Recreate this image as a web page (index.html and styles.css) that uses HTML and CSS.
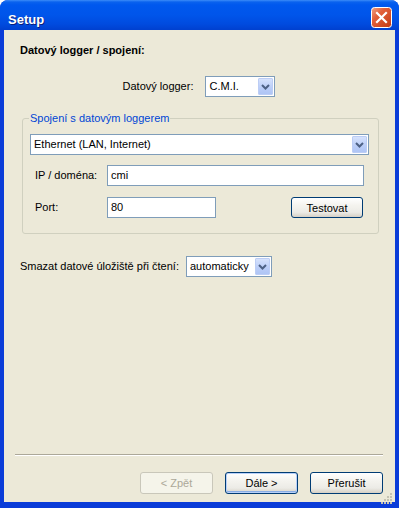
FILE: index.html
```html
<!doctype html>
<html lang="cs">
<head>
<meta charset="UTF-8">
<title>Setup</title>
<link rel="stylesheet" href="styles.css">
</head>
<body>
<div class="window">
    <div class="titlebar">
        <span class="title">Setup</span>
        <span class="close">
            <svg width="21" height="21" viewBox="0 0 21 21">
                <defs>
                    <linearGradient id="cg" x1="0" y1="0" x2="1" y2="1">
                        <stop offset="0" stop-color="#F0A487"/>
                        <stop offset="0.35" stop-color="#E2603A"/>
                        <stop offset="1" stop-color="#C23A12"/>
                    </linearGradient>
                </defs>
                <rect x="0.5" y="0.5" width="20" height="20" rx="3" fill="url(#cg)" stroke="#fff"/>
                <path d="M6 6 L15 15 M15 6 L6 15" stroke="#fff" stroke-width="2.2" stroke-linecap="square"/>
            </svg>
        </span>
    </div>
    <div class="client">
        <div class="content">
            <div class="heading">Datový logger / spojení:</div>
            <div class="logger-row">
                <span>Datový logger:</span>
                <div class="combo combo-logger">
                    <span class="combo-text">C.M.I.</span>
                    <span class="combo-btn"><svg width="9" height="6" viewBox="0 0 9 6"><path d="M1 1 L4.5 4.5 L8 1" fill="none" stroke="#4D6185" stroke-width="2"/></svg></span>
                </div>
            </div>
            <fieldset class="group">
                <legend>Spojení s datovým loggerem</legend>
                <div class="combo combo-conn">
                    <span class="combo-text">Ethernet (LAN, Internet)</span>
                    <span class="combo-btn"><svg width="9" height="6" viewBox="0 0 9 6"><path d="M1 1 L4.5 4.5 L8 1" fill="none" stroke="#4D6185" stroke-width="2"/></svg></span>
                </div>
                <div class="field-row">
                    <span class="field-label">IP / doména:</span>
                    <div class="textbox tb-ip">cmi</div>
                </div>
                <div class="field-row port-row">
                    <span class="field-label">Port:</span>
                    <div class="textbox tb-port">80</div>
                    <button class="btn btn-test">Testovat</button>
                </div>
            </fieldset>
            <div class="clear-row">
                <span class="clear-label">Smazat datové úložiště při čtení:</span>
                <div class="combo combo-clear">
                    <span class="combo-text">automaticky</span>
                    <span class="combo-btn"><svg width="9" height="6" viewBox="0 0 9 6"><path d="M1 1 L4.5 4.5 L8 1" fill="none" stroke="#4D6185" stroke-width="2"/></svg></span>
                </div>
            </div>
        </div>
        <div class="footer">
            <div class="separator"></div>
            <div class="buttons">
                <button class="btn" disabled>&lt; Zpět</button>
                <button class="btn btn-default">Dále &gt;</button>
                <button class="btn">Přerušit</button>
            </div>
        </div>
        <span class="grip">
            <svg width="12" height="12" viewBox="0 0 12 12" fill="#C5C2B2">
                <rect x="9" y="1" width="2" height="2"/>
                <rect x="6" y="4" width="2" height="2"/><rect x="9" y="4" width="2" height="2"/>
                <rect x="3" y="7" width="2" height="2"/><rect x="6" y="7" width="2" height="2"/><rect x="9" y="7" width="2" height="2"/>
                <rect x="0" y="10" width="2" height="2"/><rect x="3" y="10" width="2" height="2"/><rect x="6" y="10" width="2" height="2"/><rect x="9" y="10" width="2" height="2"/>
            </svg>
        </span>
    </div>
</div>
</body>
</html>
```

FILE: styles.css
```css
body{margin:0;background:#fff;font:11px/13px "Liberation Sans",Arial,sans-serif;color:#000;}
.window{width:399px;height:508px;display:flex;flex-direction:column;background:#0A3CD8;border-radius:8px 8px 0 0;}

/* title bar */
.titlebar{height:30px;flex:none;display:flex;align-items:center;justify-content:space-between;padding:0 7px 0 8px;border-radius:8px 8px 0 0;background:linear-gradient(#3C8CF8 0,#0A62EE 2px,#0058EE 5px,#0055EA 50%,#004BDF 80%,#0040CF 100%);}
.title{color:#fff;font:bold 13px "Liberation Sans",Arial,sans-serif;text-shadow:1px 1px #0A1E7A;margin-top:9px;}
.close{display:flex;margin-top:5px;}

/* client area */
.client{flex:1;position:relative;display:flex;flex-direction:column;margin:0 4px 6px;background:#ECE9D8;}
.content{padding:0 16px;}
.heading{margin-top:14px;font-weight:bold;}
.logger-row{display:flex;justify-content:center;align-items:center;gap:12px;margin-top:19px;margin-left:-1px;}

/* combo box */
.combo{display:flex;align-items:stretch;height:21px;box-sizing:border-box;border:1px solid #7F9DB9;background:#fff;padding:1px;}
.combo-text{flex:1;padding-left:2px;line-height:17px;white-space:nowrap;overflow:hidden;}
.combo-btn{width:15px;flex:none;display:flex;align-items:center;justify-content:center;box-sizing:border-box;border:1px solid #BCCDF5;border-radius:1px;background:linear-gradient(#D6E2FC,#BACDF8 60%,#AFC5F5);}
.combo-logger{width:70px;}
.combo-conn{width:339px;}
.combo-clear{width:86px;}

/* group box */
.group{margin:15px 1px 0 2px;padding:9px 9px 15px 7px;border:1px solid #D0D0BF;border-radius:3px;}
.group legend{padding:0 1px;margin-left:-1px;color:#0046D5;}
.field-row{display:flex;align-items:center;padding-left:5px;margin-top:10px;}
.port-row{margin-top:11px;padding-right:6px;}
.field-label{width:72px;flex:none;}
.textbox{height:21px;box-sizing:border-box;border:1px solid #7F9DB9;background:#fff;padding-left:3px;line-height:19px;}
.tb-ip{width:257px;}
.tb-port{width:109px;}

.clear-row{display:flex;align-items:center;margin-top:22px;}
.clear-label{width:166px;flex:none;}

/* buttons */
.btn{width:73px;height:22px;box-sizing:border-box;border:1px solid #003C74;border-radius:3px;padding:0;font:11px "Liberation Sans",Arial,sans-serif;color:#000;background:linear-gradient(#FFFFFF,#F4F3EE 40%,#ECEBE6 75%,#D6D0C5);}
.btn-test{width:72px;height:21px;margin-left:auto;}
.btn-default{box-shadow:inset 0 0 0 1px #B8D0F9,inset 0 -1px 0 1px #89ADE4;}
.btn:disabled{border-color:#C9C7BA;color:#ACA899;background:#F5F4EA;}

/* footer */
.footer{margin-top:auto;padding-bottom:8px;}
.separator{margin:0 12px 0 11px;border-top:1px solid #ACA899;border-bottom:1px solid #fff;}
.buttons{display:flex;justify-content:flex-end;gap:12px;margin-top:16px;padding-right:12px;}
.grip{position:absolute;right:2px;bottom:-2px;display:flex;}
```
